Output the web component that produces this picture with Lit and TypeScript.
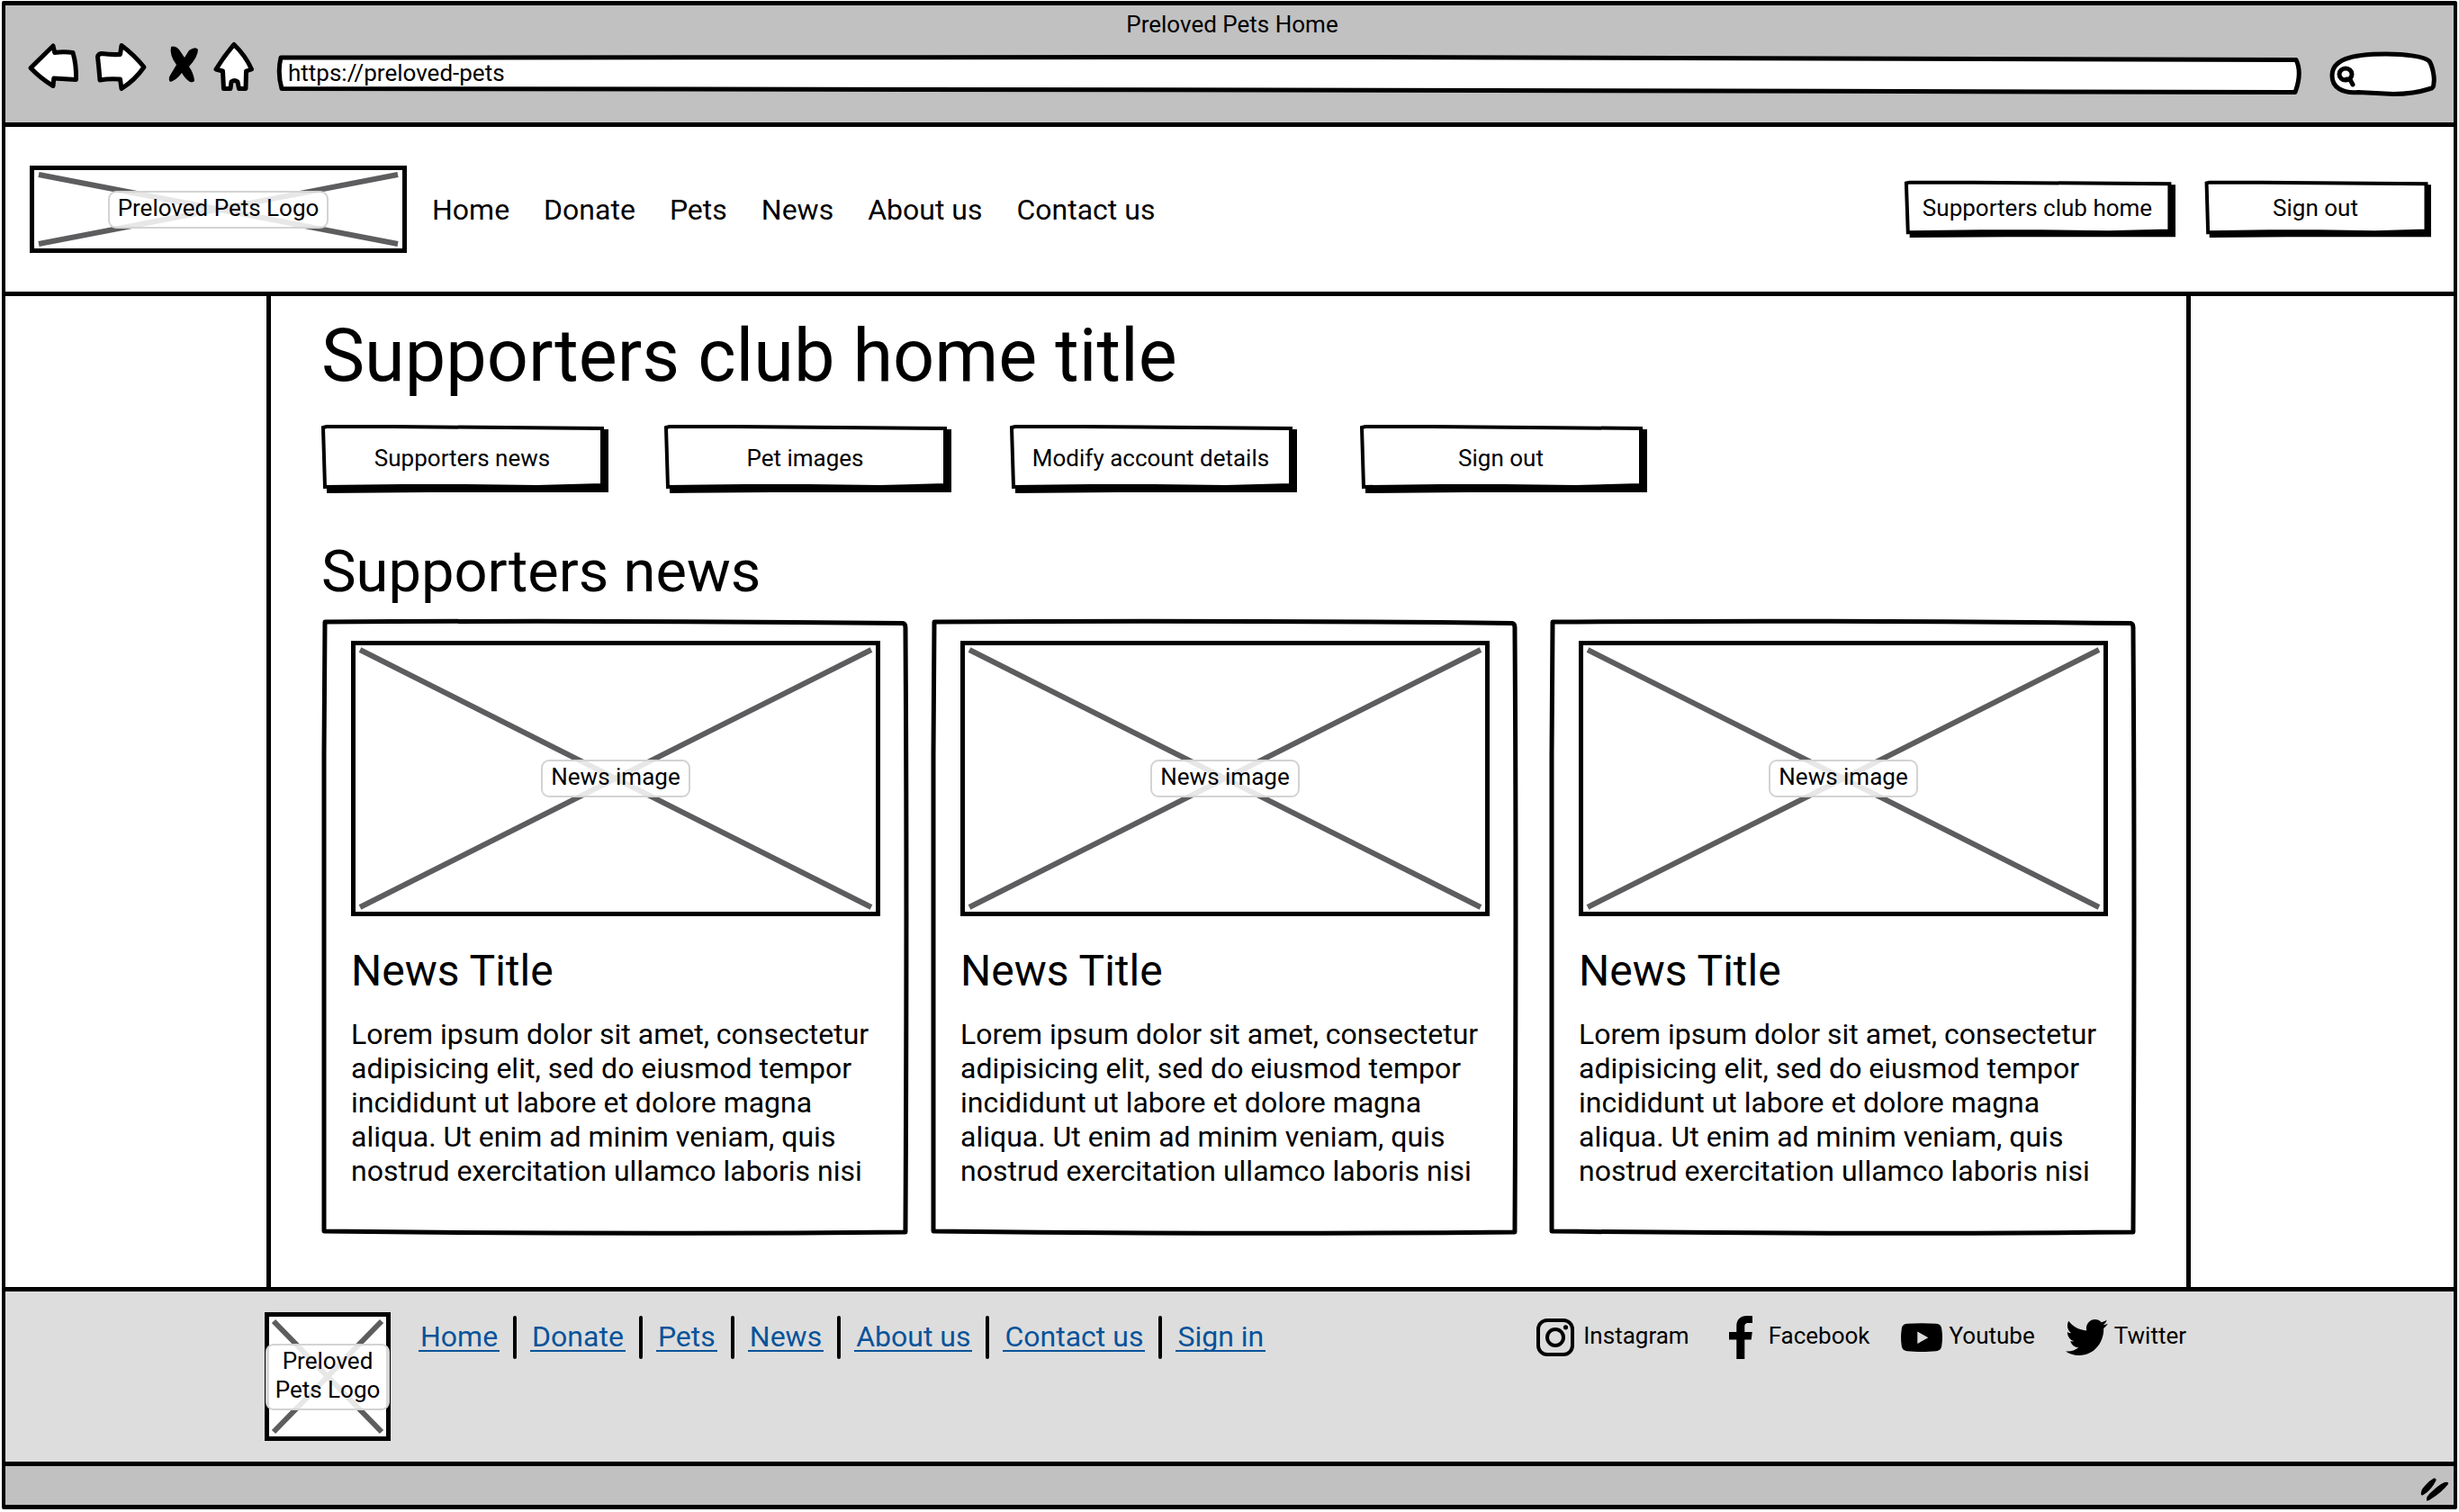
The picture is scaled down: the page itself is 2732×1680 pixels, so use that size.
import { LitElement, html, svg, css } from "lit";
import { customElement, property } from "lit/decorators.js";

const menu = ["Home", "Donate", "Pets", "News", "About us", "Contact us"];
const footerMenu = [...menu, "Sign in"];
const clubActions = ["Supporters news", "Pet images", "Modify account details", "Sign out"];
const story =
  "Lorem ipsum dolor sit amet, consectetur adipisicing elit, sed do eiusmod tempor incididunt ut labore et dolore magna aliqua. Ut enim ad minim veniam, quis nostrud exercitation ullamco laboris nisi";
const news = [1, 2, 3].map(() => ({ title: "News Title", image: "News image", text: story }));

const instagram = svg`<svg width="42" height="42" viewBox="0 0 42 42" aria-hidden="true">
  <rect x="2" y="2" width="38" height="38" rx="10" fill="none" stroke="#000" stroke-width="4"/>
  <circle cx="21" cy="21" r="9" fill="none" stroke="#000" stroke-width="4"/>
  <circle cx="32.5" cy="9.8" r="2.6"/></svg>`;
const facebook = svg`<svg width="26" height="48" viewBox="0 0 26 48" aria-hidden="true">
  <path d="M26 .3v7.6h-4.5c-3.5 0-4.2 1.7-4.2 4.1v5.9h8.5l-1.1 8.7h-7.4V48H8.3V26.6H0v-8.7h8.3v-6.4C8.3 4 12.9 0 19.5 0c3.1 0 5.7.2 6.5.3z"/></svg>`;
const youtube = svg`<svg width="46" height="32" viewBox="0 0 46 32" aria-hidden="true">
  <path fill-rule="evenodd" d="M7 .8C17 0 29 0 39 .8c4 .4 5.8 2.2 6.3 6.2.9 6 .9 12 0 18-.5 4-2.3 5.8-6.3 6.2-10 .9-22 .9-32 0-4-.4-5.8-2.2-6.3-6.2-.9-6-.9-12 0-18C1.200 3 3 1.200 7 .8zM18.300 9.500v13.500L30.300 16.200z"/></svg>`;
const twitter = svg`<svg width="47" height="40" viewBox="0 48 512 416" preserveAspectRatio="none" aria-hidden="true">
  <path d="M459.37 151.716c.325 4.548.325 9.097.325 13.645 0 138.72-105.583 298.558-298.558 298.558-59.452 0-114.68-17.219-161.137-47.106 8.447.974 16.568 1.299 25.34 1.299 49.055 0 94.213-16.568 130.274-44.832-46.132-.975-84.792-31.188-98.112-72.772 6.498.974 12.995 1.624 19.818 1.624 9.421 0 18.843-1.3 27.614-3.573-48.081-9.747-84.143-51.98-84.143-102.985v-1.299c13.969 7.797 30.214 12.67 47.431 13.319-28.264-18.843-46.781-51.005-46.781-87.391 0-19.492 5.197-37.36 14.294-52.954 51.655 63.675 129.3 105.258 216.365 109.807-1.624-7.797-2.599-15.918-2.599-24.04 0-57.828 46.782-104.934 104.934-104.934 30.213 0 57.502 12.67 76.67 33.137 23.715-4.548 46.456-13.32 66.599-25.34-7.798 24.366-24.366 44.833-46.132 57.827 21.117-2.273 41.584-8.122 60.426-16.243-14.292 20.791-32.161 39.308-52.628 54.253z"/></svg>`;
const social = [
  { name: "Instagram", icon: instagram },
  { name: "Facebook", icon: facebook },
  { name: "Youtube", icon: youtube },
  { name: "Twitter", icon: twitter },
];

/* Crossed-out box that stands in for an image. */
@customElement("sketch-image")
export class SketchImage extends LitElement {
  @property() label = "";
  static styles = css`
    :host {
      display: grid;
      place-items: center;
      place-content: center;
      position: relative;
      box-sizing: border-box;
      border: 5px solid #000;
      background: #fff;
      font: 400 26px/32px Roboto, sans-serif;
      text-align: center;
      white-space: nowrap;
    }
    .cross {
      position: absolute;
      inset: 5px;
      width: calc(100% - 10px);
      height: calc(100% - 10px);
      overflow: visible;
      stroke: #5d5d5f;
      stroke-width: 6px;
    }
    .label {
      position: relative;
      padding: 1px 9px 5px;
      border: 2px solid #d3d3d3;
      border-radius: 9px;
      background: rgba(255, 255, 255, 0.85);
    }
  `;
  render() {
    return html`<svg class="cross" aria-hidden="true">
        <line x1="0" y1="0" x2="100%" y2="100%"></line>
        <line x1="0" y1="100%" x2="100%" y2="0"></line>
      </svg>
      <span class="label"><slot>${this.label}</slot></span>`;
  }
}

/* Push button with an uneven outline and a solid shadow. */
@customElement("sketch-button")
export class SketchButton extends LitElement {
  static styles = css`
    :host {
      display: block;
      position: relative;
    }
    .shape {
      position: absolute;
      inset: 0;
      width: 100%;
      height: 100%;
      overflow: visible;
    }
    .shape path {
      vector-effect: non-scaling-stroke;
    }
    .button {
      position: relative;
      display: block;
      width: 100%;
      height: 100%;
      padding: 0 6px 3px 0;
      border: 0;
      background: none;
      color: #000;
      font: 400 26px/32px Roboto, sans-serif;
      white-space: nowrap;
      cursor: pointer;
    }
  `;
  render() {
    return html`<svg class="shape" viewBox="0 0 319 76" preserveAspectRatio="none" aria-hidden="true">
        <path d="M6 6 L319 5 L319 75 L120 75 L6 76 Z"></path>
        <path d="M2 3 L6 2 L80 2 L312 4 L312 67 L240 69 L160 68 L90 68 L4 69 Z" fill="#fff" stroke="#000" stroke-width="4"></path>
      </svg>
      <button class="button" type="button"><slot></slot></button>`;
  }
}

@customElement("app-root")
export class AppRoot extends LitElement {
  static styles = css`
    :host {
      display: block;
      background: #fff;
      color: #000;
      font: 400 26px/32px Roboto, sans-serif;
    }
    h1, h2, h3, p {
      margin: 0;
      font-weight: 400;
    }
    a {
      color: inherit;
      text-decoration: none;
    }
    .window {
      margin: 1px 2px 3px;
      border: solid #000;
      border-width: 5px 4px;
      border-radius: 2px;
      display: flex;
      flex-direction: column;
    }

    .titlebar {
      background: #c1c1c1;
      padding: 5px 19px 30px 25px;
    }
    .window-title {
      text-align: center;
    }
    .toolbar {
      display: flex;
      align-items: flex-end;
      gap: 16px;
      height: 60px;
      margin-top: 3px;
    }
    .tool {
      height: 60px;
      padding: 0;
      border: 0;
      background: none;
      cursor: pointer;
    }
    .tool svg {
      display: block;
      overflow: visible;
    }
    .ink {
      fill: #fff;
      stroke: #000;
      stroke-width: 5px;
      stroke-linejoin: round;
      stroke-linecap: round;
      vector-effect: non-scaling-stroke;
    }
    .field {
      position: relative;
      height: 45px;
    }
    .address {
      flex: 1;
    }
    .search {
      flex: none;
      width: 119px;
      height: 49px;
      margin-left: 14px;
    }
    .outline {
      position: absolute;
      inset: 0;
      width: 100%;
      height: 100%;
      overflow: visible;
    }
    .entry {
      position: relative;
      display: block;
      box-sizing: border-box;
      width: 100%;
      height: 100%;
      padding: 0 12px 6px;
      border: 0;
      outline: 0;
      background: none;
      color: inherit;
      font: inherit;
    }
    .search .entry {
      padding-left: 34px;
    }

    .header {
      display: flex;
      align-items: center;
      box-sizing: border-box;
      padding: 43px 25px 43px 27px;
      border: solid #000;
      border-width: 5px 0;
    }
    .logo {
      width: 419px;
      height: 97px;
    }
    .menu {
      display: flex;
      gap: 38px;
      margin-left: 28px;
      font-size: 32px;
      line-height: 38px;
    }
    .account {
      display: flex;
      gap: 33px;
      margin-left: auto;
    }
    .account sketch-button {
      height: 63px;
    }
    .club {
      width: 301px;
    }
    .leave {
      width: 251px;
    }

    .main {
      margin: 0 292px 0 290px;
      padding: 19px 56px 58px;
      border: solid #000;
      border-width: 0 5px;
    }
    .page-title {
      font-size: 81px;
      line-height: 96px;
    }
    .actions {
      display: grid;
      grid-template-columns: 381px 384px 389px 319px;
      margin-top: 28px;
    }
    .actions sketch-button {
      width: 319px;
      height: 76px;
    }
    .section-title {
      margin-top: 48px;
      font-size: 65px;
      line-height: 78px;
    }
    .cards {
      display: grid;
      grid-template-columns: 651fr 25fr 651fr 35fr 651fr;
      margin-top: 14px;
    }
    .card {
      position: relative;
      padding: 24px 31px 52px 33px;
    }
    .card:nth-child(2) {
      grid-column: 3;
    }
    .card:nth-child(3) {
      grid-column: 5;
    }
    .picture {
      height: 306px;
    }
    .card-title {
      position: relative;
      margin-top: 33px;
      font-size: 48px;
      line-height: 56px;
    }
    .card-text {
      position: relative;
      margin-top: 23px;
      font-size: 32px;
      line-height: 38px;
    }

    .footer {
      display: flex;
      align-items: flex-start;
      padding: 23px 297px 23px 288px;
      border: solid #000;
      border-width: 5px 0;
      background: #ddd;
    }
    .badge {
      width: 140px;
      height: 143px;
      margin-right: 31px;
    }
    .links, .social {
      display: flex;
      align-items: center;
      height: 48px;
      margin-top: 4px;
    }
    .links {
      gap: 15px;
    }
    .link {
      padding: 0 2px;
      border-bottom: 2px solid #08539a;
      color: #08539a;
      font-size: 32px;
      line-height: 30px;
      white-space: nowrap;
    }
    .bar {
      width: 4px;
      height: 48px;
      border-radius: 2px;
      background: #000;
    }
    .social {
      gap: 34px;
      margin-left: auto;
    }
    .profile {
      display: flex;
      align-items: center;
      gap: 8px;
    }
    .profile-icon {
      display: grid;
      place-items: center;
      width: 46px;
      height: 48px;
    }
    .profile-name {
      padding-bottom: 4px;
    }

    .status {
      display: flex;
      justify-content: flex-end;
      align-items: flex-end;
      height: 39px;
      padding: 0 5px 4px;
      background: #c1c1c1;
    }
  `;

  private toolbar() {
    return html`<div class="toolbar">
      <button class="tool" type="button" aria-label="Back">
        <svg width="58" height="60" viewBox="0 0 58 60"><path class="ink" d="M3 29.5 L28 5 L29.7 12.5 Q40 11 50 12.5 Q54 26 53.5 42.5 L28.8 41 L28 49.5 Q14 41 3 29.5Z"/></svg>
      </button>
      <button class="tool" type="button" aria-label="Forward">
        <svg width="60" height="60" viewBox="0 0 60 60"><path class="ink" d="M3.5 17 Q4 14 8 13.5 Q18 15 28.5 14.5 L30 4.5 Q44 15 55 28.5 Q45 43 30 52.5 L28.5 42 Q16 41 6 43 Q5 30 3.5 17Z"/></svg>
      </button>
      <button class="tool" type="button" aria-label="Stop">
        <svg width="40" height="60" viewBox="0 0 40 60"><path d="M9 6 Q15 4 20 12 L24 18 L29 10 Q36 5 39 9 Q39 17 29 28 Q34 35 35 43 Q35 46 30 45 Q25 42 21 35 Q15 43 8 45 Q5 42 9 36 L15 26 Q7 15 9 6Z"/></svg>
      </button>
      <button class="tool" type="button" aria-label="Home page">
        <svg width="55" height="60" viewBox="0 0 55 60"><path class="ink" d="M23 3.5 Q13 15 3 31 L10.5 33 L11.5 52.5 L19 52.5 L20 45 Q23.5 42 27 45 L28.5 52.5 L36 52.5 L36.5 33 L42.5 31 Q36 16 23 3.5Z"/></svg>
      </button>
      <div class="field address">
        <svg class="outline" viewBox="0 0 2249 45" preserveAspectRatio="none" aria-hidden="true">
          <path class="ink" d="M4 3 L1200 2.5 L2242 5.5 Q2249 20 2241 41.5 L1100 39 L5 37.5 Q0 20 4 3Z"/>
        </svg>
        <input class="entry" type="text" aria-label="Address" value="https://preloved-pets" />
      </div>
      <div class="field search">
        <svg class="outline" viewBox="0 0 119 49" aria-hidden="true">
          <path class="ink" d="M3 27 C3 10 22 3 63 3 C85 3 106 6 111 11 C115 17 117 30 116 35 Q116 41 112 41.5 C98 46 85 47.5 71 47.5 L32 45.5 C14 47 3 40 3 27Z"/>
          <ellipse class="ink" cx="18" cy="25.5" rx="7" ry="6.5"/>
          <path class="ink" d="M19 31 L23 31.5 L26 37"/>
        </svg>
        <input class="entry" type="search" aria-label="Search" />
      </div>
    </div>`;
  }

  render() {
    return html`<div class="window">
      <div class="titlebar">
        <div class="window-title">Preloved Pets Home</div>
        ${this.toolbar()}
      </div>

      <header class="header">
        <sketch-image class="logo" label="Preloved Pets Logo"></sketch-image>
        <nav class="menu" aria-label="Main">${menu.map((item) => html`<a href="#">${item}</a>`)}</nav>
        <div class="account">
          <sketch-button class="club">Supporters club home</sketch-button>
          <sketch-button class="leave">Sign out</sketch-button>
        </div>
      </header>

      <main class="main">
        <h1 class="page-title">Supporters club home title</h1>
        <div class="actions">${clubActions.map((item) => html`<sketch-button>${item}</sketch-button>`)}</div>
        <h2 class="section-title">Supporters news</h2>
        <div class="cards">
          ${news.map(
            (item) => html`<article class="card">
              <svg class="outline" viewBox="0 0 651 684" preserveAspectRatio="none" aria-hidden="true">
                <path class="ink" d="M4 3 Q330 1 645 4.500 Q648 5 648 9 Q650 300 648 681 Q330 684 3 680 Q2 400 3 150 Z"/>
              </svg>
              <sketch-image class="picture" label=${item.image}></sketch-image>
              <h3 class="card-title">${item.title}</h3>
              <p class="card-text">${item.text}</p>
            </article>`
          )}
        </div>
      </main>

      <footer class="footer">
        <sketch-image class="badge">Preloved<br />Pets Logo</sketch-image>
        <nav class="links" aria-label="Footer">
          ${footerMenu.map(
            (item, i) => html`${i ? html`<span class="bar"></span>` : ""}<a class="link" href="#">${item}</a>`
          )}
        </nav>
        <div class="social">
          ${social.map(
            (item) => html`<a class="profile" href="#"
              ><span class="profile-icon">${item.icon}</span><span class="profile-name">${item.name}</span></a
            >`
          )}
        </div>
      </footer>

      <div class="status">
        <svg width="32" height="26" viewBox="0 0 32 26" aria-hidden="true">
          <path d="M1 19 Q0 14 5 9 Q10 3 15 .5 Q18 0 17.5 3 Q12 14 4 18.5 Q2 20 1 19Z"/>
          <path d="M7 25.5 Q6 21 12 16 Q20 8 27 5 Q32 4 31 7 Q24 16 12 23.5 Q9 26 7 25.5Z"/>
        </svg>
      </div>
    </div>`;
  }
}
